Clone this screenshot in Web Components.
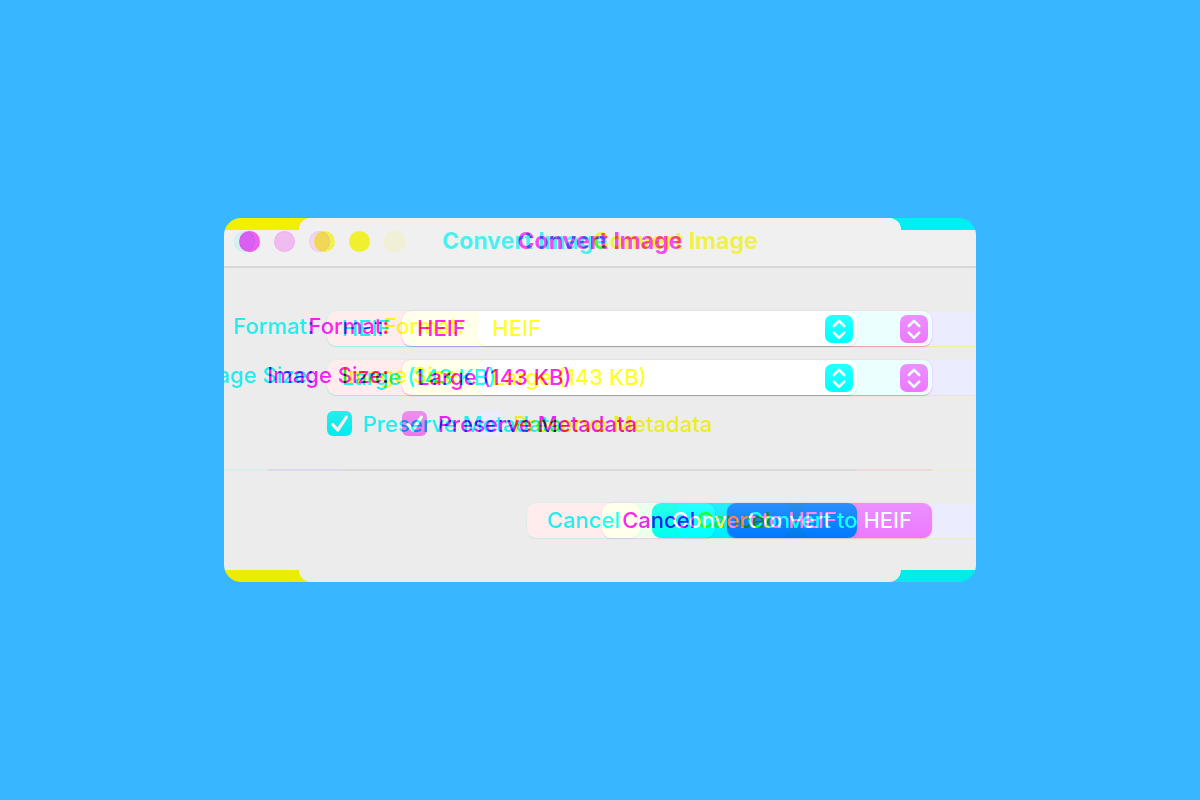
<!DOCTYPE html>
<html lang="en">
<head>
<meta charset="utf-8">
<meta name="viewport" content="width=device-width, initial-scale=1">
<title>Convert Image</title>
<style>
* {
    box-sizing: border-box;
}
body {
    margin: 0;
    min-height: 100vh;
    padding: 24px;
    display: grid;
    align-items: center;
    justify-items: center;
    background: #38b6ff;
    font: 500 22px/30px Inter, "Liberation Sans", sans-serif;
}
</style>
</head>
<body>
<channel-split></channel-split>

<script>
customElements.define('mac-titlebar', class extends HTMLElement {
    constructor() {
        super();
        this.attachShadow({mode: 'open'}).innerHTML = `
<style>
:host {
    box-sizing: border-box;
    display: grid;
    grid-template-columns: 1fr auto 1fr;
    align-items: center;
    height: 50px;
    padding: 0 15px 2px;
    background: #f0f0f0;
    border-bottom: 2px solid #d6d6d6;
}
.lights {
    display: flex;
    gap: 14px;
}
button {
    width: 21px;
    height: 21px;
    padding: 0;
    border: 1px solid rgba(0, 0, 0, 0.08);
    border-radius: 50%;
}
.close {
    background: #ff5f57;
}
.minimize {
    background: #febc2e;
}
.zoom {
    background: #d8d8d8;
}
h1 {
    margin: 0;
    font-size: 23px;
    font-weight: 700;
    line-height: 30px;
    white-space: nowrap;
    color: #4a4a4a;
}
</style>
<div class="lights">
    <button class="close" aria-label="Close"></button>
    <button class="minimize" aria-label="Minimize"></button>
    <button class="zoom" aria-label="Zoom" disabled></button>
</div>
<h1><slot></slot></h1>
`;
    }
});

customElements.define('mac-select', class extends HTMLElement {
    constructor() {
        super();
        this.attachShadow({mode: 'open'}).innerHTML = `
<style>
:host {
    display: grid;
    grid-template-columns: var(--label-width) 1fr;
    column-gap: 13px;
}
label {
    display: flex;
    justify-content: flex-end;
    line-height: 30px;
    white-space: nowrap;
    color: #232323;
}
.field {
    display: grid;
    align-items: center;
}
select, svg {
    grid-area: 1 / 1;
}
select {
    appearance: none;
    width: 100%;
    height: 35px;
    margin: 0;
    padding: 0 40px 2px 15px;
    border: 0;
    border-radius: 9px;
    background: white;
    box-shadow: 0 0 2px rgba(0, 0, 0, 0.15), 0 1px 1px rgba(0, 0, 0, 0.3);
    font: inherit;
    color: #262626;
}
svg {
    justify-self: end;
    margin-right: 4px;
    pointer-events: none;
}
</style>
<label for="value"></label>
<div class="field">
    <select id="value"><option></option></select>
    <svg width="28" height="28" viewBox="0 0 28 28" aria-hidden="true">
        <defs>
            <linearGradient id="accent" x2="0" y2="1">
                <stop offset="0" stop-color="#2890ff"/>
                <stop offset="1" stop-color="#0078ff"/>
            </linearGradient>
        </defs>
        <rect width="28" height="28" rx="7" fill="url(#accent)"/>
        <path d="M8.8 11 14 5.8l5.2 5.2M8.8 17.6l5.2 5.2 5.2-5.2" fill="none" stroke="white" stroke-width="2.6" stroke-linecap="round" stroke-linejoin="round"/>
    </svg>
</div>
`;
    }

    connectedCallback() {
        this.shadowRoot.querySelector("label").textContent = this.getAttribute("label");
        this.shadowRoot.querySelector("option").textContent = this.getAttribute("value");
    }
});

customElements.define('mac-checkbox', class extends HTMLElement {
    constructor() {
        super();
        this.attachShadow({mode: 'open'}).innerHTML = `
<style>
:host {
    display: block;
    margin-left: calc(var(--label-width) + 13px);
}
label {
    display: flex;
    align-items: center;
    gap: 11px;
    height: 25px;
    white-space: nowrap;
    color: #232323;
}
.box {
    display: grid;
}
input, svg {
    grid-area: 1 / 1;
}
input {
    appearance: none;
    width: 25px;
    height: 25px;
    margin: 0;
    border-radius: 6px;
    background: white;
}
input:checked {
    background: linear-gradient(#2890ff, #0078ff);
}
input:not(:checked) + svg {
    display: none;
}
svg {
    pointer-events: none;
}
</style>
<label>
    <span class="box">
        <input type="checkbox" checked>
        <svg width="25" height="25" viewBox="0 0 25 25" aria-hidden="true">
            <path d="M5.8 13.6l5 5.4L19.4 6.2" fill="none" stroke="white" stroke-width="3.2" stroke-linecap="round" stroke-linejoin="round"/>
        </svg>
    </span>
    <slot></slot>
</label>
`;
    }
});

customElements.define('mac-button', class extends HTMLElement {
    constructor() {
        super();
        this.attachShadow({mode: 'open'}).innerHTML = `
<style>
:host {
    display: block;
}
button {
    height: 35px;
    padding: 0 20px 2px;
    border: 0;
    border-radius: 9px;
    background: white;
    box-shadow: 0 0 2px rgba(0, 0, 0, 0.15), 0 1px 1px rgba(0, 0, 0, 0.1);
    font: inherit;
    white-space: nowrap;
    color: #262626;
}
:host([primary]) button {
    background: linear-gradient(#2890ff, #0078ff);
    color: white;
}
</style>
<button><slot></slot></button>
`;
    }
});

customElements.define('convert-dialog', class extends HTMLElement {
    constructor() {
        super();
        this.attachShadow({mode: 'open'}).innerHTML = `
<style>
:host {
    --label-width: 121px;
    display: block;
    overflow: hidden;
    border-radius: 12px;
    background: #ececec;
}
main {
    padding: 43px 44px 44px;
}
.options {
    display: grid;
    gap: 14px;
}
mac-checkbox {
    margin-top: 2px;
}
hr {
    height: 2px;
    margin: 33px 0 32px;
    border: 0;
    background: #dadada;
}
.actions {
    display: flex;
    justify-content: flex-end;
    gap: 12px;
}
</style>
<mac-titlebar>Convert Image</mac-titlebar>
<main>
    <div class="options">
        <mac-select label="Format:" value="HEIF"></mac-select>
        <mac-select label="Image Size:" value="Large (143 KB)"></mac-select>
        <mac-checkbox>Preserve Metadata</mac-checkbox>
    </div>
    <hr>
    <div class="actions">
        <mac-button>Cancel</mac-button>
        <mac-button primary>Convert to HEIF</mac-button>
    </div>
</main>
`;
    }
});

// One colour channel of whatever is slotted, slid sideways by --shift.
// The background repeats the window's outermost column in the strip left free.
customElements.define('channel-layer', class extends HTMLElement {
    constructor() {
        super();
        this.attachShadow({mode: 'open'}).innerHTML = `
<style>
:host {
    display: block;
    isolation: isolate;
    overflow: hidden;
    mix-blend-mode: screen;
    background: linear-gradient(black 12px, #f0f0f0 12px 48px, #d6d6d6 48px 50px, #ececec 50px calc(100% - 12px), black calc(100% - 12px));
}
.copy, .tint {
    grid-area: 1 / 1;
}
.stack {
    display: grid;
}
.copy {
    transform: translateX(var(--shift));
}
.tint {
    background: var(--channel);
    mix-blend-mode: multiply;
    pointer-events: none;
}
</style>
<div class="stack">
    <div class="copy"><slot></slot></div>
    <div class="tint"></div>
</div>
`;
    }
});

customElements.define('channel-split', class extends HTMLElement {
    constructor() {
        super();
        this.attachShadow({mode: 'open'}).innerHTML = `
<style>
:host {
    display: grid;
    width: 100%;
    max-width: 752px;
    isolation: isolate;
    clip-path: inset(0 round 17px);
}
channel-layer {
    grid-area: 1 / 1;
    min-width: 0;
}
.red {
    --channel: #f00;
    --shift: -75px;
}
.green {
    --channel: #0f0;
    --shift: 0px;
}
.blue {
    --channel: #00f;
    --shift: 75px;
}
</style>
<channel-layer class="red"><convert-dialog></convert-dialog></channel-layer>
<channel-layer class="blue"><convert-dialog></convert-dialog></channel-layer>
<channel-layer class="green"><convert-dialog></convert-dialog></channel-layer>
`;
    }
});
</script>
</body>
</html>
